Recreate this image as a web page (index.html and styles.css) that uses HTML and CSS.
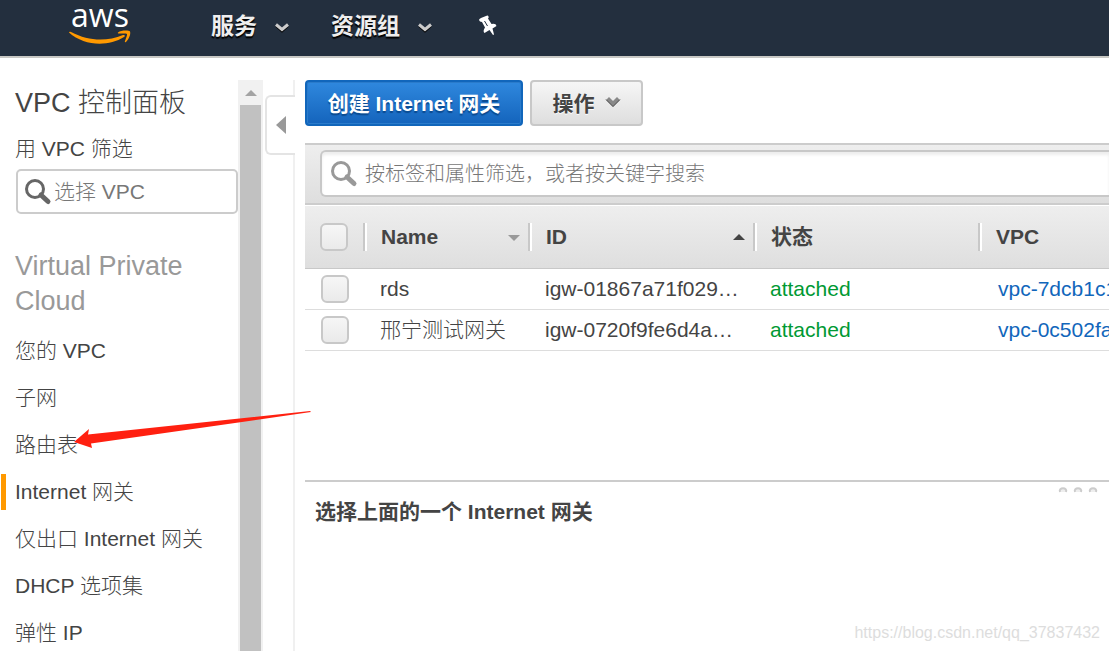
FILE: index.html
```html
<!DOCTYPE html>
<html lang="zh-CN">
<head>
<meta charset="utf-8">
<meta name="viewport" content="width=device-width, initial-scale=1">
<title>VPC 控制面板</title>
<link rel="stylesheet" href="styles.css">
</head>
<body>
<header class="topbar">
  <a class="logo" href="#" aria-label="aws">
    <svg width="62" height="44" viewBox="0 -2 62 44">
      <text class="logo-text" x="31" y="23" text-anchor="middle">aws</text>
      <path d="M0 28.500C0 27.500 1 27.500 2 28C20 37.500 38 37.500 54 31C56 30.500 56.500 32 55 33C39 43 15 42 0 28.500Z" fill="#f90"/>
      <path d="M49 28.500C52 26 60 26 61 27.500C62 30 60 35 57 38C56 38.500 55.500 38 56 37C57 34 58.500 31 58 30C57 29 53 29.500 50 29.500C49 29.500 48.500 29 49 28.500Z" fill="#f90"/>
    </svg>
  </a>
  <nav class="topnav">
    <button class="topnav-item" type="button">服务
      <svg width="14" height="10" viewBox="0 0 14 10"><path d="M1 3L7 8.500L13 3" fill="none" stroke="#000" stroke-width="2"/><path d="M1 1.500L7 6.500L13 1.500" fill="none" stroke="#ccc" stroke-width="3"/></svg>
    </button>
    <button class="topnav-item" type="button">资源组
      <svg width="14" height="10" viewBox="0 0 14 10"><path d="M1 3L7 8.500L13 3" fill="none" stroke="#000" stroke-width="2"/><path d="M1 1.500L7 6.500L13 1.500" fill="none" stroke="#ccc" stroke-width="3"/></svg>
    </button>
    <button class="topnav-item" type="button" aria-label="固定">
      <svg width="20" height="22" viewBox="0 0 20 22"><path d="M1 5Q1 4 3 3L8 1Q10 0 10.500 1.500T10 3.500L13.500 9Q18 8 18.500 11L14.500 13.500L16 19.500L15 20L11.500 15L6.500 18Q4.500 16 7 12.500L4 7Q1.500 7 1 5Z" fill="#fff"/><path d="M6.500 6L9.500 11" stroke="#232f3e" stroke-width="1"/></svg>
    </button>
  </nav>
</header>

<div class="layout">
  <aside class="sidebar">
    <h1 class="sidebar-title">VPC 控制面板</h1>
    <label class="filter-label" for="vpc-filter">用 VPC 筛选</label>
    <div class="filter-box">
      <svg width="26" height="26" viewBox="0 0 26 26"><circle cx="10" cy="10" r="8.500" fill="none" stroke="#666" stroke-width="3"/><path d="M16 16L23 22.500" stroke="#666" stroke-width="5" stroke-linecap="round"/></svg>
      <input class="text-input" id="vpc-filter" type="text" placeholder="选择 VPC">
    </div>
    <h2 class="section-title">Virtual Private Cloud</h2>
    <nav class="sidenav">
      <a class="sidenav-link" href="#">您的 VPC</a>
      <a class="sidenav-link" href="#">子网</a>
      <a class="sidenav-link" href="#">路由表</a>
      <a class="sidenav-link active" href="#">Internet 网关</a>
      <a class="sidenav-link" href="#">仅出口 Internet 网关</a>
      <a class="sidenav-link" href="#">DHCP 选项集</a>
      <a class="sidenav-link" href="#">弹性 IP</a>
    </nav>
  </aside>
  <div class="scrollbar">
    <div class="scroll-up"><svg width="12" height="6" viewBox="0 0 12 6"><path d="M0 6L6 0L12 6Z" fill="#a3a3a3"/></svg></div>
    <div class="scroll-thumb"></div>
  </div>
  <div class="gutter">
    <div class="gutter-top"></div>
    <button class="collapse" type="button" aria-label="收起"><svg width="10" height="18" viewBox="0 0 10 18"><path d="M10 0V18L0 9Z" fill="#999"/></svg></button>
    <div class="gutter-rest"></div>
  </div>

  <main class="content">
    <div class="actions">
      <button class="btn primary" type="button">创建 Internet 网关</button>
      <button class="btn" type="button">操作
        <svg width="16" height="11" viewBox="0 0 16 11"><path d="M1 3L4 0L8 4L12 0L15 3L8 10Z" fill="#888"/><path d="M1 2.500L8 9.500L15 2.500" fill="none" stroke="#555"/></svg>
      </button>
    </div>
    <section class="list-pane">
      <div class="toolbar">
        <div class="search-box">
          <svg width="27" height="27" viewBox="0 0 27 27"><circle cx="11" cy="11" r="8.500" fill="none" stroke="#999" stroke-width="3"/><path d="M17 17L24 23.500" stroke="#999" stroke-width="5" stroke-linecap="round"/></svg>
          <input class="text-input search-input" type="text" aria-label="搜索" placeholder="按标签和属性筛选，或者按关键字搜索">
        </div>
      </div>
      <table class="grid">
        <colgroup><col class="col-check"><col class="col-name"><col class="col-mid"><col class="col-mid"><col></colgroup>
        <thead>
          <tr>
            <th><input class="check" type="checkbox" aria-label="全选"></th>
            <th><div class="head">Name<svg class="sort" width="12" height="7" viewBox="0 0 12 7"><path d="M0 1H12L6 7Z" fill="#999"/></svg></div></th>
            <th><div class="head">ID<svg class="sort" width="12" height="7" viewBox="0 0 12 7"><path d="M0 6H12L6 0Z" fill="#444"/></svg></div></th>
            <th><div class="head">状态</div></th>
            <th><div class="head">VPC</div></th>
          </tr>
        </thead>
        <tbody>
          <tr>
            <td><input class="check" type="checkbox" aria-label="rds"></td>
            <td>rds</td>
            <td>igw-01867a71f029…</td>
            <td class="ok">attached</td>
            <td class="vpc"><a class="link" href="#">vpc-7dcb1c1</a></td>
          </tr>
          <tr>
            <td><input class="check" type="checkbox" aria-label="邢宁测试网关"></td>
            <td>邢宁测试网关</td>
            <td>igw-0720f9fe6d4a…</td>
            <td class="ok">attached</td>
            <td class="vpc"><a class="link" href="#">vpc-0c502fa</a></td>
          </tr>
        </tbody>
      </table>
    </section>
    <section class="detail-pane">
      <svg class="grip" width="40" height="5" viewBox="0 0 40 5"><g fill="#eee" stroke="#ccc" stroke-width="2"><path d="M2 5C0 0 10 0 8 5M17 5C15 0 25 0 23 5M32 5C30 0 40 0 38 5"/></g></svg>
      <h2 class="detail-title">选择上面的一个 Internet 网关</h2>
    </section>
  </main>
</div>

<svg class="arrow" width="240" height="40" viewBox="0 0 240 40"><path d="M1 32L16 19L15 24.500L237 1L238 2L18 33.500L19 38Z" fill="#ff2010"/></svg>
<div class="watermark">https://blog.csdn.net/qq_37837432</div>
</body>
</html>
```
FILE: styles.css
```css
* { box-sizing: border-box; }

body {
  margin: 0;
  height: 100vh;
  display: flex;
  flex-direction: column;
  overflow: hidden;
  position: relative;
  background: #fff;
  color: #444;
  font: 300 21px/28px "Liberation Sans", "Noto Sans CJK SC", sans-serif;
}

button, input { font: inherit; color: inherit; }
button { margin: 0; cursor: pointer; }
svg { flex: none; display: block; overflow: visible; }
h1, h2 { margin: 0; }

.topbar {
  flex: none;
  height: 58px;
  display: flex;
  background: #232f3e;
  border-bottom: 2px solid #c8c8c4;
}
.logo { margin: 2px 0 0 69px; }
.logo-text { font: 500 32px "Open Sans", sans-serif; fill: #fff; }
.topnav {
  display: flex;
  align-items: center;
  gap: 42px;
  margin-left: 80px;
  padding-bottom: 4px;
}
.topnav-item {
  display: flex;
  align-items: center;
  gap: 18px;
  padding: 0;
  border: 0;
  background: none;
  color: #eee;
  font-size: 23px;
  font-weight: 700;
  text-shadow: 0 2px 1px #000;
}
.topnav-item svg { margin-top: 4px; }
.topnav-item:last-child { margin-left: 4px; }
.topnav-item:last-child svg { margin-top: 0; }

.layout {
  flex: 1;
  min-height: 0;
  display: flex;
  padding-top: 22px;
}

.sidebar { width: 238px; flex: none; overflow: hidden; }
.sidebar-title {
  padding: 3px 0 0 15px;
  font-size: 27px;
  font-weight: 300;
  line-height: 40px;
}
.filter-label { display: block; padding: 12px 0 6px 15px; }
.filter-box {
  display: flex;
  align-items: center;
  gap: 3px;
  height: 45px;
  margin-left: 16px;
  padding-left: 7px;
  border: 2px solid #ccc;
  border-radius: 5px;
}
.text-input {
  flex: 1;
  min-width: 0;
  padding: 0;
  border: 0;
  outline: 0;
  background: none;
}
.text-input::placeholder { color: #777; opacity: 1; }
.section-title {
  padding: 35px 40px 14px 15px;
  color: #999;
  font-size: 27px;
  font-weight: 400;
  line-height: 35px;
}
.sidenav { display: flex; flex-direction: column; padding-left: 1px; }
.sidenav-link {
  height: 36px;
  margin-bottom: 11px;
  padding-left: 14px;
  color: #444;
  line-height: 36px;
  text-decoration: none;
}
.sidenav-link.active { padding-left: 9px; border-left: 5px solid #f90; }

.scrollbar {
  width: 25px;
  flex: none;
  display: flex;
  flex-direction: column;
  background: #f1f1f1;
}
.scroll-up { height: 25px; display: grid; place-items: center; }
.scroll-thumb { flex: 1; margin: 0 2px; background: #c1c1c1; }

.gutter {
  width: 32px;
  flex: none;
  display: flex;
  flex-direction: column;
  padding-left: 2px;
}
.gutter-top { height: 15px; border-right: 2px solid #f0f0f0; }
.gutter-rest { flex: 1; border-right: 2px solid #f0f0f0; }
.collapse {
  height: 60px;
  padding: 0 0 0 9px;
  border: 2px solid #e4e4e4;
  border-right: 0;
  border-radius: 6px 0 0 6px;
  background: #fff;
}

.content {
  flex: 1;
  min-width: 0;
  display: flex;
  flex-direction: column;
  padding-left: 10px;
}
.actions { display: flex; gap: 7px; padding-bottom: 17px; }
.btn {
  display: flex;
  align-items: center;
  justify-content: center;
  gap: 10px;
  height: 46px;
  min-width: 113px;
  padding: 2px 20px 0;
  border: 2px solid #c8c8c8;
  border-radius: 4px;
  background: linear-gradient(#f6f6f6, #dedede);
  font-weight: 700;
  text-shadow: 0 1px 0 #fff;
}
.btn svg { margin-bottom: 4px; }
.btn.primary {
  min-width: 218px;
  border-color: #16b;
  background: linear-gradient(#2f88de, #1464bc);
  box-shadow: inset 0 0 0 1px #2a7bcb;
  color: #fff;
  text-shadow: 0 2px 1px #0a4a90;
}

.list-pane { flex: 2 1 0; min-height: 0; overflow: hidden; }
.toolbar {
  height: 62px;
  padding: 5px 0 0 15px;
  border: solid #ccc;
  border-width: 2px 0;
  background: linear-gradient(#eee, #dedede);
}
.search-box {
  display: flex;
  align-items: center;
  gap: 8px;
  height: 47px;
  padding-left: 8px;
  border: 2px solid #c8c8c8;
  border-right: 0;
  border-radius: 6px 0 0 6px;
  background: #fff;
  box-shadow: inset 0 3px 3px #eee;
}
.search-box { border-top-right-radius: 0; border-bottom-right-radius: 0; }
.search-input { font-size: 20px; }

.grid {
  width: 100%;
  table-layout: fixed;
  border-collapse: separate;
  border-spacing: 0;
  border-top: 1px solid #fff;
}
.col-check { width: 58px; }
.col-name { width: 165px; }
.col-mid { width: 225px; }
.grid thead { background: linear-gradient(#eee, #dedede); }
.grid th {
  height: 63px;
  padding: 0;
  border-bottom: 1px solid #c8c8c8;
  text-align: left;
}
.grid td {
  height: 41px;
  padding: 0 0 0 17px;
  border-bottom: 1px solid #ddd;
  white-space: nowrap;
}
.grid th:first-child, .grid td:first-child { padding-left: 15px; }
.grid td:first-child { padding-left: 16px; }
.grid td.vpc { padding-left: 20px; }
.head {
  display: flex;
  align-items: center;
  justify-content: space-between;
  padding: 0 8px 0 16px;
  border-left: 2px solid #c8c8c8;
  box-shadow: inset 2px 0 0 #fff;
}
.check {
  appearance: none;
  display: block;
  width: 28px;
  height: 28px;
  margin: 0;
  border: 2px solid #c8c8c8;
  border-radius: 6px;
  background: linear-gradient(#f6f6f6, #eaeaea);
}
.ok { color: #093; }
.link { color: #16b; text-decoration: none; }

.detail-pane {
  flex: 1 1 0;
  min-height: 0;
  display: flex;
  flex-direction: column;
  border-top: 2px solid #ccc;
}
.grip { align-self: flex-end; margin: 5px 11px 0 0; }
.detail-title { padding: 6px 10px; font-size: 21px; font-weight: 700; }

.arrow { position: absolute; left: 73px; top: 410px; }
.watermark {
  position: absolute;
  right: 9px;
  bottom: 8px;
  color: #ddd;
  font-size: 16px;
  line-height: 20px;
}
```
